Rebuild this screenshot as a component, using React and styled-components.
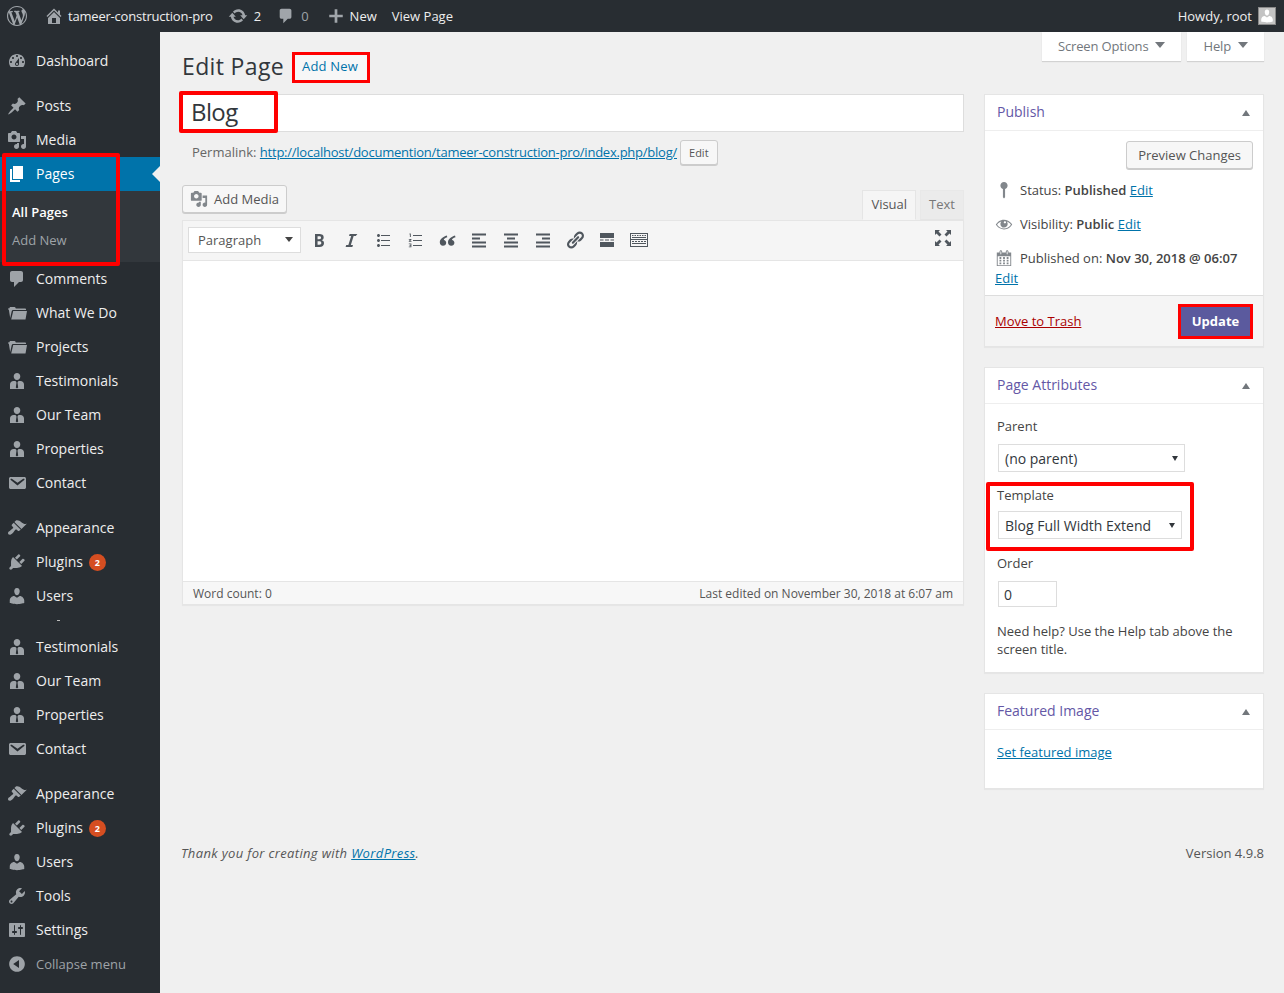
import styled, { createGlobalStyle } from "styled-components"

const BODY_FONT = `"Open Sans", "Noto Sans", sans-serif`
const BAR_FONT = `"Open Sans", "Noto Sans", sans-serif`

const icons = {
    wp: "M20 10c0-5.51-4.49-10-10-10C4.48 0 0 4.49 0 10c0 5.52 4.48 10 10 10 5.51 0 10-4.48 10-10zM7.78 15.37L4.37 6.22c.55-.02 1.17-.08 1.17-.08.5-.06.44-1.13-.06-1.11 0 0-1.45.11-2.37.11-.18 0-.37 0-.58-.01C4.12 2.69 6.87 1.11 10 1.11c2.33 0 4.45.87 6.05 2.34-.68-.11-1.65.39-1.65 1.58 0 .74.45 1.36.9 2.1.35.61.55 1.36.55 2.46 0 1.49-1.4 5-1.4 5l-3.03-8.37c.54-.02.82-.17.82-.17.5-.05.44-1.25-.06-1.22 0 0-1.44.12-2.38.12-.87 0-2.33-.12-2.33-.12-.5-.03-.56 1.2-.06 1.22l.92.08 1.26 3.41zM17.41 10c.24-.64.74-1.87.43-4.25.7 1.29 1.05 2.71 1.05 4.25 0 3.29-1.73 6.24-4.4 7.78.97-2.59 1.94-5.2 2.92-7.78zM6.1 18.09C3.12 16.65 1.11 13.53 1.11 10c0-1.3.23-2.48.72-3.59C3.25 10.3 4.67 14.2 6.1 18.09zm4.03-6.63l2.58 6.98c-.86.29-1.76.45-2.71.45-.79 0-1.57-.11-2.29-.33.81-2.38 1.62-4.74 2.42-7.1z",
    home: "M16 8.5l1.53 1.53-1.06 1.06L10 4.62l-6.47 6.47-1.06-1.06L10 2.5l4 4v-2h2v4zm-6-2.46l6 5.99V18H4v-5.97zM12 17v-5H8v5h4z",
    update: "M10.2 3.28c3.53 0 6.43 2.61 6.92 6h2.08l-3.5 4-3.5-4h2.32c-.45-1.97-2.21-3.45-4.32-3.45-1.45 0-2.73.71-3.54 1.78L4.95 5.66C6.23 4.2 8.11 3.28 10.2 3.28zm-.4 13.44c-3.52 0-6.43-2.61-6.92-6H.8l3.5-4c1.17 1.33 2.33 2.67 3.5 4H5.48c.45 1.97 2.21 3.45 4.32 3.45 1.45 0 2.73-.71 3.54-1.78l1.71 1.95c-1.28 1.46-3.15 2.38-5.25 2.38z",
    comment: "M5 2h9c1.1 0 2 .9 2 2v7c0 1.1-.9 2-2 2h-2l-5 5v-5H5c-1.1 0-2-.9-2-2V4c0-1.1.9-2 2-2z",
    plus: "M17.5 8.5v3h-6v6h-3v-6h-6v-3h6v-6h3v6z",
    dashboard: "M3.76 16h12.48c1.1-1.37 1.76-3.11 1.76-5 0-4.42-3.58-8-8-8s-8 3.58-8 8c0 1.89.66 3.63 1.76 5zM10 4c.55 0 1 .45 1 1s-.45 1-1 1-1-.45-1-1 .45-1 1-1zM6 6c.55 0 1 .45 1 1s-.45 1-1 1-1-.45-1-1 .45-1 1-1zm8 0c.55 0 1 .45 1 1s-.45 1-1 1-1-.45-1-1 .45-1 1-1zm-5.37 5.55L12 7v6c0 1.1-.9 2-2 2s-2-.9-2-2c0-.57.24-1.08.63-1.45zM4 10c.55 0 1 .45 1 1s-.45 1-1 1-1-.45-1-1 .45-1 1-1zm12 0c.55 0 1 .45 1 1s-.45 1-1 1-1-.45-1-1 .45-1 1-1zm-5 3c0-.55-.45-1-1-1s-1 .45-1 1 .45 1 1 1 1-.45 1-1z",
    post: "M10.44 3.02l1.82-1.82 6.36 6.35-1.83 1.82c-1.05-.68-2.48-.57-3.41.36l-.75.75c-.92.93-1.04 2.35-.35 3.41l-1.83 1.82-2.41-2.41-2.8 2.79c-.42.42-3.38 2.71-3.8 2.29s1.86-3.39 2.28-3.81l2.79-2.79L4.1 9.36l1.83-1.82c1.05.69 2.48.57 3.4-.36l.75-.75c.93-.92 1.05-2.35.36-3.41z",
    media: "M13 11V4c0-.55-.45-1-1-1h-1.67L9 1H5L3.67 3H2c-.55 0-1 .45-1 1v7c0 .55.45 1 1 1h10c.55 0 1-.45 1-1zM7 4.5c1.38 0 2.5 1.12 2.5 2.5S8.38 9.5 7 9.5 4.5 8.38 4.5 7 5.62 4.5 7 4.5zM14 6h5v10.5c0 1.38-1.12 2.5-2.5 2.5S14 17.88 14 16.5s1.12-2.5 2.5-2.5c.17 0 .34.02.5.05V9h-3V6zm-4 8.05V13h2v3.5c0 1.38-1.12 2.5-2.5 2.5S7 17.88 7 16.5 8.12 14 9.5 14c.17 0 .34.02.5.05z",
    page: "M6 15V2h10v13H6zm-1 1h8v2H3V5h2v11z",
    folder: "M3 4h4.500c.5 0 .8.3 1 .8l.3.7H18c.5 0 1 .4 1 1v.5H6.200c-.8 0-1.300.4-1.500 1.200L3.200 15 1.800 6.500H1c0-.3 0-.5 0-.5 0-.4.4-.8.9-.8H2.500L2.800 4.300C2.800 4.100 2.900 4 3 4zM6.200 8H20l-1.500 8.500H4.200z",
    person: "M10 2c1.900 0 3.300 1.500 3.300 3.400S11.900 9 10 9 6.700 7.300 6.700 5.400 8.100 2 10 2zM3 18v-4.500C3 11.500 4.600 10 6.500 10h2l1 1.500-.7 5 1.200 1 1.200-1-.7-5 1-1.500h2c1.900 0 3.500 1.500 3.500 3.500V18z",
    email: "M3.87 4h13.25C18.37 4 19 4.59 19 5.79v8.42c0 1.19-.63 1.79-1.88 1.79H3.87c-1.25 0-1.88-.6-1.88-1.79V5.79c0-1.2.63-1.79 1.88-1.79zm6.62 8.6l6.74-5.53c.24-.2.43-.66.13-1.07-.29-.41-.82-.42-1.17-.17l-5.7 3.86L4.8 5.83c-.35-.25-.88-.24-1.17.17-.3.41-.11.87.13 1.07z",
    appearance: "M14.48 11.06L7.41 3.99l1.5-1.5c.5-.56 2.3-.47 3.51.32 1.21.8 1.43 1.28 2.91 2.1 1.18.64 2.45 1.26 4.45.85zm-.71.71L6.7 4.7 4.93 6.47c-.39.39-.39 1.02 0 1.41l1.06 1.06c.39.39.39 1.03 0 1.42-.6.6-1.43 1.11-2.21 1.69-.35.26-.7.53-1.01.84C1.43 13.23.76 14.45 1.1 15.8c.1.39.4.69.79.79 1.35.34 2.57-.33 3.93-1.67.31-.31.58-.66.84-1.01.58-.78 1.09-1.61 1.69-2.21.39-.39 1.03-.39 1.42 0l1.06 1.06c.39.39 1.02.39 1.41 0z",
    plugins: "M13.11 4.36L9.87 7.6 8 5.73l3.24-3.24c.35-.34 1.05-.2 1.56.32.52.51.66 1.21.31 1.55zm-8 1.77l.91-1.12 9.01 9.01-1.19.84c-.71.71-2.63 1.16-3.82 1.16H6.14L4.9 17.26c-.59.59-1.54.59-2.12 0-.59-.58-.59-1.53 0-2.12l1.24-1.24v-3.88c0-1.13.4-3.19 1.09-3.89zm7.26 3.97l3.24-3.24c.34-.35 1.04-.21 1.55.31.52.51.66 1.21.31 1.55l-3.24 3.25z",
    users: "M10 9.25c-2.27 0-2.73-3.44-2.73-3.44C7 4.02 7.82 2 9.97 2c2.16 0 2.98 2.02 2.71 3.81 0 0-.41 3.44-2.68 3.44zm0 2.57L12.72 10c2.39 0 4.52 2.33 4.52 4.53v2.49s-3.65 1.13-7.24 1.13c-3.65 0-7.24-1.13-7.24-1.13v-2.49c0-2.25 1.94-4.48 4.47-4.48z",
    tools: "M16.68 9.77c-1.34 1.34-3.3 1.67-4.95.99l-5.41 6.52c-.99.99-2.59.99-3.58 0s-.99-2.59 0-3.57l6.52-5.42c-.68-1.65-.35-3.61.99-4.95 1.28-1.28 3.12-1.62 4.72-1.06l-2.89 2.89 2.82 2.82 2.86-2.87c.53 1.58.18 3.39-1.08 4.65zM3.81 16.21c.4.39 1.04.39 1.43 0 .4-.4.4-1.04 0-1.43-.39-.4-1.03-.4-1.43 0-.39.39-.39 1.03 0 1.43z",
    settings: "M18 16V4c0-.55-.45-1-1-1H3c-.55 0-1 .45-1 1v12c0 .55.45 1 1 1h14c.55 0 1-.45 1-1zM8 11h1c.55 0 1 .45 1 1s-.45 1-1 1H8v1.5c0 .28-.22.5-.5.5s-.5-.22-.5-.5V13H6c-.55 0-1-.45-1-1s.45-1 1-1h1V5.500c0-.28.22-.5.5-.5s.5.22.5.5V11zm5-2h-1c-.55 0-1-.45-1-1s.45-1 1-1h1V5.500c0-.28.22-.5.5-.5s.5.22.5.5V7h1c.55 0 1 .45 1 1s-.45 1-1 1h-1v5.500c0 .28-.22.5-.5.5s-.5-.22-.5-.5V9z",
    collapse: "M10 2.16c4.33 0 7.84 3.51 7.84 7.84s-3.51 7.84-7.84 7.84S2.16 14.33 2.16 10 5.71 2.16 10 2.16zm2 11.72V6.12L6.18 9.97z",
    pin: "M10 1c2.200 0 4 1.800 4 4 0 1.800-1.200 3.300-2.800 3.800V18L10 19.500 8.800 18V8.800C7.200 8.300 6 6.800 6 5c0-2.200 1.800-4 4-4z",
    eye: "M18.3 9.5C15 4.9 8.5 3.8 3.9 7.2c-1.2.9-2.2 2.1-3 3.4.2.4.5.8.8 1.2 3.3 4.6 9.6 5.6 14.2 2.4.9-.7 1.7-1.4 2.4-2.4.3-.4.5-.8.8-1.2-.3-.4-.5-.8-.8-1.1zm-8.2-2.3c.5-.5 1.3-.5 1.8 0s.5 1.3 0 1.8-1.3.5-1.8 0c-.5-.4-.5-1.3 0-1.8zm-.1 7.7c-3.1 0-6-1.6-7.7-4.2C3.5 9 5.1 7.8 7 7.2c-.7.8-1 1.7-1 2.7 0 2.2 1.7 4.1 4 4.1 2.2 0 4.1-1.7 4.1-4v-.1c0-1-.4-2-1.1-2.7 1.9.6 3.5 1.8 4.7 3.5-1.7 2.6-4.6 4.2-7.7 4.2z",
    calendar: "M15 4h3v15H2V4h3V3c0-.41.15-.76.44-1.06.29-.29.65-.44 1.06-.44s.77.15 1.06.44c.29.3.44.65.44 1.06v1h4V3c0-.41.15-.76.44-1.06.29-.29.65-.44 1.06-.44s.77.15 1.06.44c.29.3.44.65.44 1.06v1zM6 3v2.5c0 .14.05.26.15.36.09.09.21.14.35.14s.26-.05.35-.14c.1-.1.15-.22.15-.36V3c0-.14-.05-.26-.15-.35-.09-.1-.21-.15-.35-.15s-.26.05-.35.15c-.1.09-.15.21-.15.35zm7 0v2.5c0 .14.05.26.14.36.1.09.22.14.36.14s.26-.05.36-.14c.09-.1.14-.22.14-.36V3c0-.14-.05-.26-.14-.35-.1-.1-.22-.15-.36-.15s-.26.05-.36.15c-.09.09-.14.21-.14.35zm4 15V8H3v10h14zM7 9v2H5V9h2zm2 0h2v2H9V9zm4 2V9h2v2h-2zm-6 1v2H5v-2h2zm2 0h2v2H9v-2zm4 2v-2h2v2h-2zm-6 1v2H5v-2h2zm4 2H9v-2h2v2zm4 0h-2v-2h2v2z",
    bold: "M6 4v13h4.54c1.37 0 2.46-.33 3.26-1 .8-.66 1.2-1.58 1.2-2.77 0-.84-.17-1.51-.51-2.01s-.9-.85-1.67-1.03v-.09c.57-.1 1.02-.4 1.36-.9s.51-1.13.51-1.91c0-1.14-.39-1.98-1.17-2.5C12.75 4.26 11.5 4 9.78 4H6zm2.57 5.15V6.26h1.36c.73 0 1.27.11 1.61.32.34.22.51.58.51 1.07 0 .54-.16.92-.47 1.15s-.82.35-1.51.35h-1.5zm0 2.19h1.6c1.44 0 2.16.53 2.16 1.61 0 .6-.17 1.05-.51 1.34s-.86.43-1.57.43H8.57v-3.38z",
    italic: "M14.78 6h-2.13l-2.8 9h2.12l-.62 2H4.6l.62-2h2.14l2.8-9H8.03l.62-2h7.76z",
    ul: "M5.5 7C4.67 7 4 6.33 4 5.5 4 4.68 4.67 4 5.5 4 6.32 4 7 4.68 7 5.5 7 6.33 6.32 7 5.5 7zM8 5h9v1H8V5zm-2.5 7c-.83 0-1.5-.67-1.5-1.5C4 9.68 4.67 9 5.5 9c.82 0 1.5.68 1.5 1.5 0 .83-.68 1.5-1.5 1.5zM8 10h9v1H8v-1zm-2.5 7c-.83 0-1.5-.67-1.5-1.5 0-.82.67-1.5 1.5-1.5.82 0 1.5.68 1.5 1.5 0 .83-.68 1.5-1.5 1.5zM8 15h9v1H8v-1z",
    ol: "M8 5h9v1H8V5zM8 10h9v1H8v-1zM8 15h9v1H8v-1zM4.500 3.500h1.300V7H4.900V4.500h-.4zM3.800 9h2.600v.9L5 11h1.500v.8H3.800V11l1.500-1.200H3.800zM3.800 13.500h2.600v3.800H3.800v-.8h1.700V16H4.500v-.7h1v-1H3.800z",
    quote: "M9.800 5.500C5.800 6.800 2.800 9.200 2.800 12.300c0 2 1.300 3.400 3.200 3.400 1.800 0 3.200-1.300 3.200-3 0-1.500-1-2.600-2.400-2.800.2-1 1.200-1.900 3.500-2.600zM18 5.500c-4 1.300-7 3.700-7 6.800 0 2 1.300 3.400 3.200 3.400 1.800 0 3.200-1.300 3.200-3 0-1.500-1-2.600-2.400-2.800.2-1 1.200-1.900 3.500-2.600z",
    alignLeft: "M3 3.500h14v2H3zM3 7.500h8v2H3zM3 11.500h14v2H3zM3 15.500h14v2H3z",
    alignCenter: "M3 3.500h14v2H3zM6 7.500h8v2H6zM3 11.500h14v2H3zM3 15.500h14v2H3z",
    alignRight: "M3 3.500h14v2H3zM9 7.500h8v2H9zM3 11.500h14v2H3zM3 15.500h14v2H3z",
    link: "M17.74 2.76c1.68 1.69 1.68 4.41 0 6.1l-1.53 1.52c-1.12 1.12-2.7 1.47-4.14 1.09l2.62-2.61.76-.77.76-.76c.84-.84.84-2.2 0-3.04-.84-.85-2.2-.85-3.04 0l-.77.76-3.38 3.38c-.37-1.44-.02-3.02 1.1-4.14l1.52-1.53c1.69-1.68 4.42-1.68 6.1 0zM8.59 13.43l5.34-5.34c.42-.42.42-1.1 0-1.52-.44-.43-1.13-.39-1.53 0l-5.33 5.34c-.42.42-.42 1.1 0 1.52.44.43 1.13.39 1.52 0zm-.76 2.29l4.14-4.15c.38 1.44.03 3.02-1.09 4.14l-1.52 1.53c-1.69 1.68-4.41 1.68-6.1 0-1.68-1.68-1.68-4.42 0-6.1l1.53-1.52c1.12-1.12 2.7-1.47 4.14-1.1l-4.14 4.15c-.85.84-.85 2.2 0 3.05.84.84 2.2.84 3.04 0z",
    more: "M3 3h14v5H3zM3 9.500h3.500v1H3zM8 9.500h4v1H8zM13.500 9.500H17v1h-3.500zM3 12h14v5H3z",
    sink: "M1 3h18v14H1zM2 4v5h16V4zM2 10v6h16v-6zM3 5h1.500v1H3zM5.500 5H7v1H5.500zM8 5h1.500v1H8zM10.500 5H12v1h-1.500zM13 5h1.500v1H13zM15.500 5H17v1h-1.500zM3 7h14v1H3zM3 11h2v1H3zM6 11h2v1H6zM9 11h2v1H9zM12 11h2v1h-2zM15 11h2v1h-2zM3 13h14v1H3z",
    fullscreen: "M2 2h5L5.500 3.500 8.500 6.500 6.500 8.500 3.500 5.500 2 7zM18 2v5l-1.500-1.500-3 3-2-2 3-3L13 2zM2 18v-5l1.500 1.500 3-3 2 2-3 3L7 18zM18 18h-5l1.500-1.500-3-3 2-2 3 3L18 13z",
}

const Dash = ({ name, size = 20 }) => (
    <svg width={size} height={size} viewBox="0 0 20 20" fill="currentColor" fillRule="evenodd" aria-hidden="true">
        <path d={icons[name]} />
    </svg>
)

const menuTop = [
    { icon: "dashboard", label: "Dashboard" },
    null,
    { icon: "post", label: "Posts" },
    { icon: "media", label: "Media" },
]

const menuMiddle = [
    { icon: "comment", label: "Comments" },
    { icon: "folder", label: "What We Do" },
    { icon: "folder", label: "Projects" },
    { icon: "person", label: "Testimonials" },
    { icon: "person", label: "Our Team" },
    { icon: "person", label: "Properties" },
    { icon: "email", label: "Contact" },
    null,
    { icon: "appearance", label: "Appearance" },
    { icon: "plugins", label: "Plugins", badge: 2 },
    { icon: "users", label: "Users" },
    "dash",
    { icon: "person", label: "Testimonials" },
    { icon: "person", label: "Our Team" },
    { icon: "person", label: "Properties" },
    { icon: "email", label: "Contact" },
    null,
    { icon: "appearance", label: "Appearance" },
    { icon: "plugins", label: "Plugins", badge: 2 },
    { icon: "users", label: "Users" },
    { icon: "tools", label: "Tools" },
    { icon: "settings", label: "Settings" },
]

const toolbarIcons = ["bold", "italic", "ul", "ol", "quote", "alignLeft", "alignCenter", "alignRight", "link", "more", "sink"]

const renderMenu = (items) =>
    items.map((item, i) => {
        if (item === null) return <MenuGap key={i} />
        if (item === "dash") return <MenuGap key={i} $dash />
        return (
            <MenuItem key={i}>
                <MenuIcon><Dash name={item.icon} /></MenuIcon>
                <MenuLabel>{item.label}</MenuLabel>
                {item.badge && <Badge>{item.badge}</Badge>}
            </MenuItem>
        )
    })

const App = () => {
    return (
        <Page>
            <GlobalStyle />
            <AdminBar>
                <BarGroup>
                    <BarIcon $left={7}><Dash name="wp" /></BarIcon>
                    <BarIcon $left={17}><Dash name="home" /></BarIcon>
                    <SiteName>tameer-construction-pro</SiteName>
                    <BarIcon $left={15}><Dash name="update" /></BarIcon>
                    <BarText $left={6}>2</BarText>
                    <BarIcon $left={16}><Dash name="comment" size={18} /></BarIcon>
                    <BarText $left={6} $dim>0</BarText>
                    <BarIcon $left={18}><Dash name="plus" size={18} /></BarIcon>
                    <BarText $left={5}>New</BarText>
                    <BarText $left={15}>View Page</BarText>
                </BarGroup>
                <BarGroup>
                    <BarText>Howdy, root</BarText>
                    <Avatar>
                        <svg width="16" height="16" viewBox="0 0 20 20" fill="#fff"><path d={icons.users} /></svg>
                    </Avatar>
                </BarGroup>
            </AdminBar>
            <Body>
                <Sidebar>
                    {renderMenu(menuTop)}
                    <ActiveGroup>
                        <MenuItem $active>
                            <MenuIcon $active><Dash name="page" /></MenuIcon>
                            <MenuLabel>Pages</MenuLabel>
                            <ActiveArrow />
                        </MenuItem>
                        <SubMenu>
                            <SubItem $current>All Pages</SubItem>
                            <SubItem>Add New</SubItem>
                        </SubMenu>
                        <PagesMarker />
                    </ActiveGroup>
                    {renderMenu(menuMiddle)}
                    <CollapseItem>
                        <MenuIcon><Dash name="collapse" /></MenuIcon>
                        Collapse menu
                    </CollapseItem>
                </Sidebar>
                <Main>
                    <TopRow>
                        <TitleRow>
                            <Heading>Edit Page</Heading>
                            <AddNewLink href="#">Add New</AddNewLink>
                        </TitleRow>
                        <ScreenTabs>
                            <ScreenTab>Screen Options <TabCaret /></ScreenTab>
                            <ScreenTab>Help <TabCaret /></ScreenTab>
                        </ScreenTabs>
                    </TopRow>
                    <Columns>
                        <EditorColumn>
                            <TitleWrap>
                                <TitleInput defaultValue="Blog" />
                                <BlogMarker />
                            </TitleWrap>
                            <PermalinkRow>
                                Permalink:&nbsp;<PermalinkUrl href="#">http://localhost/documention/tameer-construction-pro/index.php/blog/</PermalinkUrl>
                                <SmallButton>Edit</SmallButton>
                            </PermalinkRow>
                            <MediaRow>
                                <MediaButton>
                                    <Dash name="media" size={18} />
                                    Add Media
                                </MediaButton>
                                <EditorTabs>
                                    <EditorTab $active>Visual</EditorTab>
                                    <EditorTab>Text</EditorTab>
                                </EditorTabs>
                            </MediaRow>
                            <EditorBox>
                                <Toolbar>
                                    <FormatSelect>Paragraph<FormatCaret /></FormatSelect>
                                    <ToolIcons>
                                        {toolbarIcons.map((name) => (
                                            <ToolIcon key={name}><Dash name={name} /></ToolIcon>
                                        ))}
                                    </ToolIcons>
                                    <FullscreenIcon><Dash name="fullscreen" /></FullscreenIcon>
                                </Toolbar>
                                <EditArea />
                                <StatusBar>
                                    <span>Word count: 0</span>
                                    <span>Last edited on November 30, 2018 at 6:07 am</span>
                                </StatusBar>
                            </EditorBox>
                        </EditorColumn>
                        <SideColumn>
                            <Panel>
                                <PanelHeader>Publish<PanelCaret /></PanelHeader>
                                <PublishActions>
                                    <PreviewButton>Preview Changes</PreviewButton>
                                </PublishActions>
                                <MetaList>
                                    <MetaRow>
                                        <MetaIcon><Dash name="pin" /></MetaIcon>
                                        <span>Status: <b>Published</b> <Link href="#">Edit</Link></span>
                                    </MetaRow>
                                    <MetaRow>
                                        <MetaIcon><Dash name="eye" /></MetaIcon>
                                        <span>Visibility: <b>Public</b> <Link href="#">Edit</Link></span>
                                    </MetaRow>
                                    <MetaRow>
                                        <MetaIcon><Dash name="calendar" /></MetaIcon>
                                        <span>Published on: <b>Nov 30, 2018 @ 06:07</b></span>
                                    </MetaRow>
                                    <MetaEdit><Link href="#">Edit</Link></MetaEdit>
                                </MetaList>
                                <PublishFooter>
                                    <TrashLink href="#">Move to Trash</TrashLink>
                                    <UpdateButton>Update</UpdateButton>
                                </PublishFooter>
                            </Panel>
                            <Panel>
                                <PanelHeader>Page Attributes<PanelCaret /></PanelHeader>
                                <AttributesBody>
                                    <FieldLabel>Parent</FieldLabel>
                                    <SelectBox $width={187}>(no parent)<SelectCaret /></SelectBox>
                                    <TemplateField>
                                        <FieldLabel>Template</FieldLabel>
                                        <SelectBox $width={184}>Blog Full Width Extend<SelectCaret /></SelectBox>
                                        <TemplateMarker />
                                    </TemplateField>
                                    <OrderLabel>Order</OrderLabel>
                                    <OrderInput defaultValue="0" />
                                    <HelpText>Need help? Use the Help tab above the screen title.</HelpText>
                                </AttributesBody>
                            </Panel>
                            <Panel>
                                <PanelHeader>Featured Image<PanelCaret /></PanelHeader>
                                <FeaturedBody><Link href="#">Set featured image</Link></FeaturedBody>
                            </Panel>
                        </SideColumn>
                    </Columns>
                    <Footer>
                        <FooterThanks>Thank you for creating with <Link href="#">WordPress</Link>.</FooterThanks>
                        <span>Version 4.9.8</span>
                    </Footer>
                </Main>
            </Body>
        </Page>
    )
}

export default App


const GlobalStyle = createGlobalStyle`
    html, body{
        margin:0;
        padding:0;
        background:#f0f0f0;
    }
    *{
        box-sizing: border-box;
    }
`

const Page = styled.div`
    width:1284px;
    height:993px;
    overflow:hidden;
    display:flex;
    flex-direction:column;
    font-family:${BODY_FONT};
    font-size:13px;
    color:#444;
`

const AdminBar = styled.header`
    height:32px;
    flex:none;
    display:flex;
    justify-content:space-between;
    align-items:center;
    padding-right:8px;
    background:#282d32;
    font-family:${BAR_FONT};
    font-size:13px;
    color:#eee;
`

const BarGroup = styled.div`
    display:flex;
    align-items:center;
`

const BarIcon = styled.span`
    display:flex;
    margin-left:${(p) => p.$left}px;
    color:#a0a5aa;
`

const BarText = styled.span`
    margin-left:${(p) => p.$left || 0}px;
    color:${(p) => (p.$dim ? "#9ea3a8" : "#eee")};
    white-space:nowrap;
`

const SiteName = styled(BarText)`
    margin-left:4px;
    letter-spacing:-.2px;
`

const Avatar = styled.span`
    display:flex;
    align-items:flex-end;
    justify-content:center;
    width:18px;
    height:18px;
    margin-left:6px;
    background:#c4c4c4;
    border:1px solid #8a8a8a;
    overflow:hidden;
`

const Body = styled.div`
    flex:1;
    display:flex;
    min-height:0;
`

const Sidebar = styled.nav`
    width:160px;
    flex:none;
    padding-top:12px;
    background:#282d32;
    font-size:14px;
    color:#eee;
`

const MenuItem = styled.div`
    position:relative;
    display:flex;
    align-items:center;
    height:34px;
    padding-left:7px;
    white-space:nowrap;
    background:${(p) => (p.$active ? "#0073aa" : "transparent")};
    color:${(p) => (p.$active ? "#fff" : "#eee")};
`

const MenuIcon = styled.span`
    display:flex;
    width:29px;
    flex:none;
    color:${(p) => (p.$active ? "#fff" : "#9ea3a8")};
`

const MenuLabel = styled.span`
    margin-bottom:2px;
`

const MenuGap = styled.div`
    height:${(p) => (p.$dash ? 17 : 11)}px;

    ${(p) => p.$dash && `
        &:after{
            content:'';
            display:block;
            width:3px;
            height:1px;
            margin-left:57px;
            transform:translateY(7px);
            background:#bbb;
        }
    `}
`

const Badge = styled.span`
    display:inline-flex;
    align-items:center;
    justify-content:center;
    width:17px;
    height:17px;
    margin-left:6px;
    border-radius:50%;
    background:#d54e21;
    color:#fff;
    font-size:9px;
    font-weight:700;
`

const ActiveGroup = styled.div`
    position:relative;
`

const ActiveArrow = styled.span`
    position:absolute;
    right:0;
    top:50%;
    margin-top:-8px;
    border:8px solid transparent;
    border-right-color:#f0f0f0;
    border-left-width:0;
`

const SubMenu = styled.div`
    height:71px;
    padding-top:7px;
    background:#32373c;
`

const SubItem = styled.div`
    height:28px;
    padding-left:12px;
    line-height:28px;
    font-size:13px;
    font-weight:${(p) => (p.$current ? 600 : 400)};
    color:${(p) => (p.$current ? "#fff" : "#9ea3a8")};
`

const CollapseItem = styled(MenuItem)`
    font-size:13px;
    color:#9ea3a8;
`

const Marker = styled.span`
    position:absolute;
    border:4px solid #f00;
    border-radius:2px;
    pointer-events:none;
`

const PagesMarker = styled(Marker)`
    left:2px;
    top:-4px;
    width:118px;
    height:113px;
`

const BlogMarker = styled(Marker)`
    left:-3px;
    top:-3px;
    width:99px;
    height:42px;
`

const TemplateMarker = styled(Marker)`
    left:-11px;
    top:-4px;
    width:208px;
    height:69px;
`

const Main = styled.main`
    flex:1;
    min-width:0;
    padding:0 20px 0 22px;
    background:#f0f0f0;
`

const TopRow = styled.div`
    display:flex;
    justify-content:space-between;
    align-items:flex-start;
    height:62px;
`

const TitleRow = styled.div`
    display:flex;
    align-items:center;
    gap:8px;
    padding-top:20px;
`

const Heading = styled.h1`
    margin:0 0 2px;
    font-size:23px;
    font-weight:400;
    line-height:29px;
    letter-spacing:.35px;
    color:#32373c;
`

const AddNewLink = styled.a`
    display:block;
    width:78px;
    height:31px;
    padding-right:2px;
    border:3px solid #f00;
    background:#f7f7f7;
    color:#0073aa;
    font-size:13px;
    line-height:22px;
    letter-spacing:.2px;
    text-align:center;
    text-decoration:none;
`

const ScreenTabs = styled.div`
    display:flex;
    gap:6px;
    font-family:${BAR_FONT};
`

const ScreenTab = styled.div`
    display:flex;
    align-items:center;
    gap:7px;
    height:29px;
    padding:0 16px 2px;
    background:#fff;
    box-shadow:0 1px 1px rgba(0,0,0,.12);
    color:#72777c;
    font-size:13px;
    letter-spacing:-.15px;
`

const TabCaret = styled.span`
    border:5px solid transparent;
    border-top:6px solid #72777c;
    border-bottom-width:0;
    margin-top:-1px;
`

const Columns = styled.div`
    display:grid;
    grid-template-columns:782px 280px;
    gap:20px;
    align-items:start;
`

const EditorColumn = styled.div`
    display:flex;
    flex-direction:column;
`

const SideColumn = styled.aside`
    display:flex;
    flex-direction:column;
    gap:20px;
`

const TitleWrap = styled.div`
    position:relative;
`

const TitleInput = styled.input`
    display:block;
    width:100%;
    height:38px;
    padding:0 8px 3px;
    border:1px solid #ddd;
    outline:none;
    background:#fff;
    font-family:inherit;
    font-size:24px;
    letter-spacing:-.6px;
    color:#32373c;
`

const PermalinkRow = styled.div`
    display:flex;
    align-items:center;
    height:26px;
    margin-top:7px;
    padding-left:10px;
    color:#666;
`

const Link = styled.a`
    color:#0073aa;
`

const PermalinkUrl = styled(Link)`
    letter-spacing:-.24px;
`

const SmallButton = styled.button`
    height:25px;
    margin-left:3px;
    padding:0 8px;
    border:1px solid #ccc;
    border-radius:3px;
    background:#f7f7f7;
    box-shadow:0 1px 0 #ccc;
    color:#555;
    font-family:inherit;
    font-size:11px;
`

const MediaRow = styled.div`
    display:flex;
    justify-content:space-between;
    align-items:flex-start;
    margin-top:20px;
    height:35px;
`

const MediaButton = styled.button`
    display:flex;
    align-items:center;
    gap:6px;
    height:28px;
    padding:0 7px;
    border:1px solid #ccc;
    border-radius:3px;
    background:#f7f7f7;
    box-shadow:0 1px 0 #ccc;
    color:#555;
    font-family:inherit;
    font-size:13px;

    svg{
        color:#82878c;
    }
`

const EditorTabs = styled.div`
    display:flex;
    gap:4px;
    margin-top:5px;
`

const EditorTab = styled.div`
    height:30px;
    padding:0 8px;
    line-height:27px;
    border:1px solid ${(p) => (p.$active ? "#e5e5e5" : "#e8e8e8")};
    border-bottom:${(p) => (p.$active ? "1px solid #f5f5f5" : "1px solid #e5e5e5")};
    background:${(p) => (p.$active ? "#f5f5f5" : "#ebebeb")};
    color:${(p) => (p.$active ? "#555" : "#777")};
    font-size:13px;
    position:relative;
    z-index:1;
`

const EditorBox = styled.div`
    border:1px solid #e5e5e5;
    background:#fff;
    box-shadow:0 1px 1px rgba(0,0,0,.04);
`

const Toolbar = styled.div`
    display:flex;
    align-items:center;
    height:40px;
    padding:0 5px 2px;
    border-bottom:1px solid #e5e5e5;
    background:#f5f5f5;
`

const FormatSelect = styled.div`
    display:flex;
    align-items:center;
    justify-content:space-between;
    width:113px;
    height:26px;
    padding:0 7px 0 9px;
    border:1px solid #ddd;
    background:#fff;
    color:#555;
    font-size:13px;
`

const FormatCaret = styled.span`
    border:4px solid transparent;
    border-top:5px solid #444;
    border-bottom-width:0;
`

const ToolIcons = styled.div`
    display:flex;
    margin-left:2px;
`

const ToolIcon = styled.span`
    display:flex;
    justify-content:center;
    width:32px;
    color:#50575e;
`

const FullscreenIcon = styled.span`
    display:flex;
    margin-left:auto;
    margin-right:5px;
    margin-top:-4px;
    color:#50575e;
`

const EditArea = styled.div`
    height:320px;
    background:#fff;
`

const StatusBar = styled.div`
    display:flex;
    justify-content:space-between;
    align-items:center;
    height:23px;
    padding:0 10px;
    border-top:1px solid #e5e5e5;
    background:#f7f7f7;
    color:#555;
    font-size:12px;
`

const Panel = styled.section`
    border:1px solid #e5e5e5;
    background:#fff;
    box-shadow:0 1px 1px rgba(0,0,0,.04);
`

const PanelHeader = styled.h2`
    display:flex;
    justify-content:space-between;
    align-items:center;
    height:36px;
    margin:0;
    padding:0 13px 2px 12px;
    border-bottom:1px solid #eee;
    color:#6457a6;
    font-size:14px;
    font-weight:400;
`

const PanelCaret = styled.span`
    margin-top:3px;
    border:4px solid transparent;
    border-bottom:6px solid #72777c;
    border-top-width:0;
`

const PublishActions = styled.div`
    display:flex;
    justify-content:flex-end;
    padding:10px 10px 0;
`

const PreviewButton = styled.button`
    height:28px;
    padding:0 11px;
    border:1px solid #ccc;
    border-radius:3px;
    background:#f7f7f7;
    box-shadow:0 1px 0 #ccc;
    color:#555;
    font-family:inherit;
    font-size:13px;
`

const MetaList = styled.div`
    padding-top:4px;
`

const MetaRow = styled.div`
    display:flex;
    align-items:center;
    height:34px;
    padding-left:10px;
    white-space:nowrap;

    b{
        font-weight:600;
    }
`

const MetaIcon = styled.span`
    display:flex;
    width:25px;
    flex:none;
    color:#82878c;

    svg{
        width:18px;
        height:18px;
    }
`

const MetaEdit = styled.div`
    height:20px;
    margin-top:-6px;
    padding-left:10px;
    line-height:18px;
`

const PublishFooter = styled.div`
    display:flex;
    justify-content:space-between;
    align-items:center;
    height:51px;
    margin-top:6px;
    padding:0 10px;
    border-top:1px solid #ddd;
    background:#f5f5f5;
`

const TrashLink = styled.a`
    color:#a00;
`

const UpdateButton = styled.button`
    width:75px;
    height:35px;
    border:3px solid #f00;
    outline:none;
    background:#5b5a9e;
    color:#fff;
    font-family:inherit;
    font-size:13px;
    font-weight:700;
`

const AttributesBody = styled.div`
    padding:13px 12px 14px;
`

const FieldLabel = styled.div`
    height:19px;
    line-height:19px;
    color:#444;
`

const SelectBox = styled.div`
    display:flex;
    align-items:center;
    justify-content:space-between;
    width:${(p) => p.$width}px;
    height:28px;
    margin:8px 0 0 1px;
    padding:0 6px;
    border:1px solid #ddd;
    background:#fff;
    color:#32373c;
    font-size:14px;
`

const SelectCaret = styled.span`
    border:3.5px solid transparent;
    border-top:5px solid #32373c;
    border-bottom-width:0;
`

const TemplateField = styled.div`
    position:relative;
    margin-top:14px;
    width:184px;

    ${SelectBox}{
        margin-top:6px;
    }
`

const OrderLabel = styled(FieldLabel)`
    margin-top:15px;
`

const OrderInput = styled.input`
    display:block;
    width:59px;
    height:26px;
    margin:8px 0 0 1px;
    padding:0 5px;
    border:1px solid #ddd;
    outline:none;
    font-family:inherit;
    font-size:14px;
    color:#32373c;
`

const HelpText = styled.p`
    margin:15px 0 0;
    line-height:18px;
`

const FeaturedBody = styled.div`
    height:58px;
    padding:13px 12px 0;
`

const Footer = styled.footer`
    display:flex;
    justify-content:space-between;
    margin-top:55px;
    margin-left:-1px;
    color:#555;
    font-size:13px;
`

const FooterThanks = styled.i`
    letter-spacing:.35px;
`
